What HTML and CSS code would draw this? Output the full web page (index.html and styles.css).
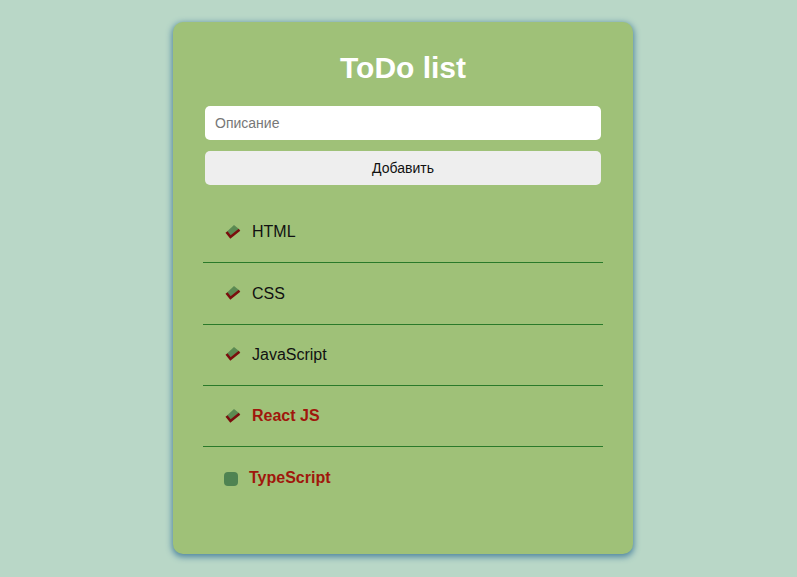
FILE: index.html
```html
<!DOCTYPE html>
<html lang="ru">
<head>
<meta charset="utf-8">
<title>ToDo list</title>
<link rel="stylesheet" href="styles.css">
</head>
<body>
<div class="page">
  <div class="card">
    <h1 class="title">ToDo list</h1>
    <form class="form">
      <input class="input" type="text" placeholder="Описание">
      <button class="btn" type="button">Добавить</button>
    </form>
    <ul class="list">
      <li class="item">
        <svg class="check" width="18" height="17" viewBox="0 0 18 17"><polygon points="3,8.5 10,2 15.5,6.5 6.5,13" fill="#5b8a52"/><polyline points="2.5,9 6.5,14 15.5,6.8" fill="none" stroke="#7a0d0d" stroke-width="2.6"/></svg>
        <span class="label">HTML</span>
      </li>
      <li class="item">
        <svg class="check" width="18" height="17" viewBox="0 0 18 17"><polygon points="3,8.5 10,2 15.5,6.5 6.5,13" fill="#5b8a52"/><polyline points="2.5,9 6.5,14 15.5,6.8" fill="none" stroke="#7a0d0d" stroke-width="2.6"/></svg>
        <span class="label">CSS</span>
      </li>
      <li class="item">
        <svg class="check" width="18" height="17" viewBox="0 0 18 17"><polygon points="3,8.5 10,2 15.5,6.5 6.5,13" fill="#5b8a52"/><polyline points="2.5,9 6.5,14 15.5,6.8" fill="none" stroke="#7a0d0d" stroke-width="2.6"/></svg>
        <span class="label">JavaScript</span>
      </li>
      <li class="item">
        <svg class="check" width="18" height="17" viewBox="0 0 18 17"><polygon points="3,8.5 10,2 15.5,6.5 6.5,13" fill="#5b8a52"/><polyline points="2.5,9 6.5,14 15.5,6.8" fill="none" stroke="#7a0d0d" stroke-width="2.6"/></svg>
        <span class="label label-bold">React JS</span>
      </li>
      <li class="item item-last">
        <span class="box"></span>
        <span class="label label-bold">TypeScript</span>
      </li>
    </ul>
  </div>
</div>
</body>
</html>
```
FILE: styles.css
```css
html, body {
  margin: 0;
  padding: 0;
}
body {
  background: #b9d7c7;
  font-family: "Liberation Sans", Arial, sans-serif;
  min-height: 577px;
}
.page {
  display: flex;
  justify-content: center;
  padding: 22px 0 0 9px;
}
.card {
  width: 460px;
  box-sizing: border-box;
  padding: 28px 32px 46px;
  background: #9fc178;
  border-radius: 10px;
  box-shadow: 0 2px 6px 1px #4f86a0;
}
.title {
  margin: 0 0 20px;
  text-align: center;
  color: #ffffff;
  font-size: 30px;
  font-weight: bold;
  line-height: 36px;
}
.form {
  display: flex;
  flex-direction: column;
  gap: 11px;
  margin: 0;
}
.input {
  height: 34px;
  box-sizing: border-box;
  border: none;
  border-radius: 5px;
  background: #ffffff;
  padding: 0 10px;
  font-family: "Liberation Sans", Arial, sans-serif;
  font-size: 14px;
  color: #222;
  outline: none;
}
.input::placeholder {
  color: #777777;
}
.btn {
  height: 34px;
  border: none;
  border-radius: 5px;
  background: #eeeeee;
  font-family: "Liberation Sans", Arial, sans-serif;
  font-size: 14px;
  color: #111;
  padding: 0;
}
.list {
  list-style: none;
  margin: 17px -2px 0;
  padding: 0;
}
.item {
  height: 60.35px;
  display: flex;
  align-items: center;
  padding-left: 21px;
  border-bottom: 1px solid #2a7a2a;
}
.item-last {
  border-bottom: none;
}
.check {
  display: block;
  margin: -2px 10px 0 0;
}
.box {
  width: 14px;
  height: 14px;
  border-radius: 4px;
  background: #4f8352;
  margin: 2px 11px 0 0;
}
.label {
  font-size: 16px;
  color: #111111;
}
.label-bold {
  font-weight: bold;
  color: #a0170c;
}
```
